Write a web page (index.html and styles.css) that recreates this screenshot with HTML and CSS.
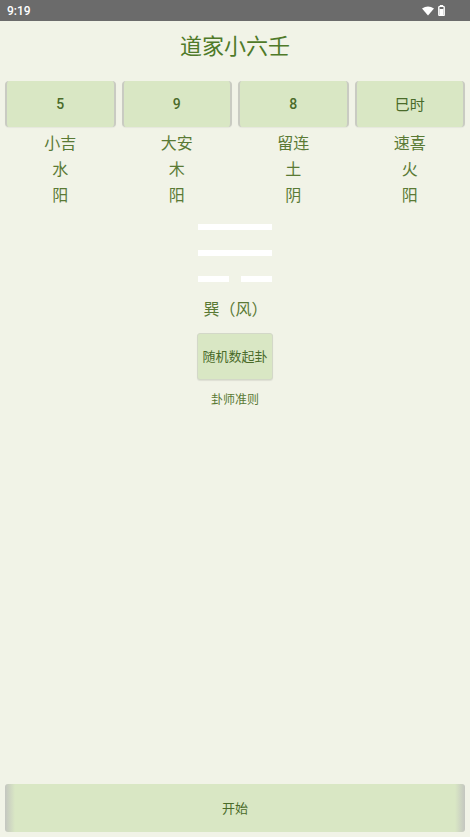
FILE: index.html
```html
<!DOCTYPE html>
<html lang="zh">
<head>
  <meta charset="UTF-8">
  <title>道家小六壬</title>
  <link rel="stylesheet" href="styles.css">
</head>
<body>

<div class="status-bar">
  <span class="clock">9:19</span>
  <span class="status-icons">
    <svg width="12" height="10" viewBox="0 0 12 10"><path d="M0 2.5 Q6 -1.5 12 2.5 L6 9.5 Z" fill="#fff"/></svg>
    <svg width="7" height="11" viewBox="0 0 7 11"><rect x="2" y="0" width="3" height="1.5" fill="#fff"/><rect x="0.8" y="1.4" width="5.4" height="9.2" rx="0.8" fill="none" stroke="#fff" stroke-width="1.4"/><rect x="1.5" y="4" width="4" height="6" fill="#fff"/></svg>
  </span>
</div>

<div class="page">
  <h1 class="title">道家小六壬</h1>

  <div class="inputs">
    <button class="num-btn">5</button>
    <button class="num-btn">9</button>
    <button class="num-btn">8</button>
    <button class="num-btn">巳时</button>
  </div>

  <div class="results">
    <div class="result">
      <div>小吉</div><div>水</div><div>阳</div>
    </div>
    <div class="result">
      <div>大安</div><div>木</div><div>阳</div>
    </div>
    <div class="result">
      <div>留连</div><div>土</div><div>阴</div>
    </div>
    <div class="result">
      <div>速喜</div><div>火</div><div>阳</div>
    </div>
  </div>

  <!-- 卦象：上两爻为阳，下爻为阴 -->
  <div class="gua">
    <div class="yao yang"></div>
    <div class="yao yang"></div>
    <div class="yao yin"><span></span><span></span></div>
  </div>

  <div class="gua-name">巽（风）</div>
  <button class="random-btn">随机数起卦</button>
  <div class="rules">卦师准则</div>

  <div class="spacer"></div>

  <button class="start-btn">开始</button>
</div>

</body>
</html>
```

FILE: styles.css
```css
body {
  margin: 0;
  background-color: #f1f3e7;
  font-family: 'Noto Sans CJK SC', 'Noto Sans', sans-serif;
  color: #5a7a35;
  height: 837px;
  display: flex;
  flex-direction: column;
}

.status-bar {
  height: 21px;
  background: #6b6b6b;
  color: #fff;
  display: flex;
  align-items: center;
  justify-content: space-between;
  padding: 0 25px 0 7px;
  font-family: Roboto, sans-serif;
  font-size: 12px;
  font-weight: 500;
}

.status-icons {
  display: flex;
  align-items: center;
  gap: 4px;
}

.page {
  flex: 1;
  display: flex;
  flex-direction: column;
  align-items: center;
  padding: 0 5px 5px;
}

.title {
  margin: 8px 0 0;
  height: 30px;
  line-height: 30px;
  font-size: 22px;
  font-weight: 400;
  color: #4f7a29;
}

.inputs {
  align-self: stretch;
  display: grid;
  grid-template-columns: repeat(4, 1fr);
  gap: 6px;
  margin-top: 22px;
}

.num-btn,
.random-btn,
.start-btn {
  font-family: inherit;
  background: #d9e7c4;
  color: #4a6b2a;
  border: none;
  cursor: pointer;
}

.num-btn {
  height: 46px;
  font-family: Roboto, 'Noto Sans CJK SC', sans-serif;
  font-size: 14px;
  font-weight: 500;
  border-radius: 4px;
  border-left: 2px solid #c9cbc2;
  border-right: 2px solid #c9cbc2;
  box-shadow: 0 1px 1px rgba(0, 0, 0, 0.05);
}

.num-btn:last-child {
  font-family: 'Noto Sans CJK SC', sans-serif;
  font-weight: 400;
  font-size: 15px;
  padding-bottom: 3px;
}

.results {
  align-self: stretch;
  display: grid;
  grid-template-columns: repeat(4, 1fr);
  gap: 6px;
  margin-top: 2px;
}

.result {
  text-align: center;
  font-size: 16px;
  line-height: 26px;
}

.gua {
  width: 74px;
  margin-top: 17px;
  display: flex;
  flex-direction: column;
  gap: 20px;
}

.yao {
  height: 6px;
}

.yang {
  background: #fff;
}

.yin {
  display: flex;
  justify-content: space-between;
}

.yin span {
  width: 31px;
  background: #fff;
}

.gua-name {
  margin-top: 14px;
  font-size: 16px;
  line-height: 24px;
  padding-left: 1px;
}

.random-btn {
  margin-top: 13px;
  width: 76px;
  height: 47px;
  padding: 0 0 2px;
  font-size: 13px;
  border-radius: 3px;
  border: 1px solid #d3d8c8;
  box-shadow: 0 1px 1px rgba(0, 0, 0, 0.08);
}

.rules {
  margin-top: 9px;
  font-size: 12px;
  line-height: 20px;
}

.spacer {
  flex: 1;
}

.start-btn {
  align-self: stretch;
  height: 48px;
  padding-bottom: 3px;
  font-size: 13px;
  border-radius: 3px;
  background: linear-gradient(to right, #c4c6c0 0, #d9e7c4 10px, #d9e7c4 calc(100% - 10px), #c4c6c0 100%);
}
```
